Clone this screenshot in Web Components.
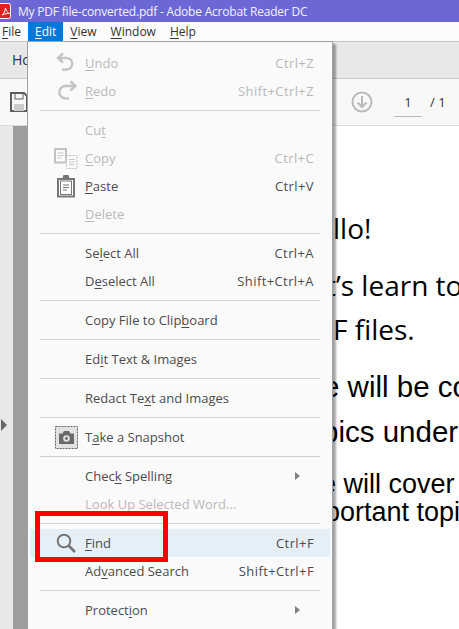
<!DOCTYPE html>
<html>
<head>
<meta charset="utf-8">
<style>
    html, body { margin: 0; padding: 0; height: 100%; overflow: hidden; background: #fff; }
    body { font-family: "Open Sans", "Noto Sans", sans-serif; }
</style>
</head>
<body>
<reader-window></reader-window>

<script>
const ICONS = {
    undo: `<svg width="22" height="22" viewBox="0 0 22 22" fill="none" stroke="#c4c4c4" stroke-width="2.4"><path d="M3.500 6h8a5.700 5.700 0 0 1 0 11.500H7"/><path d="M8 1.500 3 6l5 4.500"/></svg>`,
    redo: `<svg width="22" height="22" viewBox="0 0 22 22" fill="none" stroke="#c4c4c4" stroke-width="2.4"><path d="M20 6h-9.500a6.200 6.200 0 0 0 0 12.400H14"/><path d="M15.500 1.500 20.500 6l-5 4.500"/></svg>`,
    copy: `<svg width="24" height="21" viewBox="0 0 24 21" fill="none"><rect x="1" y="1" width="11" height="13.500" fill="#fafafa" stroke="#c2c2c2" stroke-width="2"/><path d="M3.500 5h6M3.500 7.500h6M3.500 10h4" stroke="#c8c8c8"/><rect x="12.500" y="7.500" width="10.500" height="13" fill="#fafafa" stroke="#c2c2c2" stroke-dasharray="2 1"/><path d="M15 11.500h6M15 14h6M15 16.500h5" stroke="#c8c8c8"/></svg>`,
    paste: `<svg width="20" height="24" viewBox="0 0 20 24" fill="none"><path d="M1 4h5.500l1-3h5l1 3H19v19.500H1z" fill="#777"/><rect x="3" y="6" width="14" height="15.500" fill="#fff"/><rect x="4.500" y="7" width="11" height="13.500" fill="#fff" stroke="#777"/><path d="M7 11h6M7 13.500h6M7 16h4" stroke="#777"/></svg>`,
    snapshot: `<svg width="23" height="23" viewBox="0 0 23 23" fill="none"><rect x="0.500" y="0.500" width="22" height="22" fill="#e2e2e2" stroke="#666" stroke-dasharray="2 1"/><path d="M4 7.500h3.500L9 5h5l1.500 2.500H19V18H4z" fill="#6a6a6a"/><circle cx="11.500" cy="12.500" r="3.300" fill="#e2e2e2"/><circle cx="11.500" cy="12.500" r="1.400" fill="#6a6a6a"/></svg>`,
    find: `<svg width="20" height="20" viewBox="0 0 20 20" fill="none" stroke="#767676"><circle cx="8" cy="8" r="6.300" stroke-width="2"/><path d="M12.500 12.500 19 19" stroke-width="2.600"/></svg>`
};

const MENU_ROWS = [
    { text: 'Undo', key: 'U', short: 'Ctrl+Z', off: true, icon: 'undo' },
    { text: 'Redo', key: 'R', short: 'Shift+Ctrl+Z', off: true, icon: 'redo' },
    { sep: true },
    { text: 'Cut', key: 't', short: '', off: true },
    { text: 'Copy', key: 'C', short: 'Ctrl+C', off: true, icon: 'copy' },
    { text: 'Paste', key: 'P', short: 'Ctrl+V', icon: 'paste' },
    { text: 'Delete', key: 'D', short: '', off: true },
    { sep: true },
    { text: 'Select All', key: 'l', short: 'Ctrl+A' },
    { text: 'Deselect All', key: 'e', short: 'Shift+Ctrl+A' },
    { sep: true },
    { text: 'Copy File to Clipboard', key: 'b', short: '' },
    { sep: true },
    { text: 'Edit Text & Images', key: 'i', short: '' },
    { sep: true },
    { text: 'Redact Text and Images', key: 'x', short: '' },
    { sep: true },
    { text: 'Take a Snapshot', key: 'a', short: '', icon: 'snapshot' },
    { sep: true },
    { text: 'Check Spelling', key: 'k', short: '', more: true },
    { text: 'Look Up Selected Word...', key: 'o', short: '', off: true },
    { sep: true },
    { text: 'Find', key: 'F', short: 'Ctrl+F', icon: 'find', hover: true },
    { text: 'Advanced Search', key: 'v', short: 'Shift+Ctrl+F' },
    { sep: true },
    { text: 'Protection', key: 'i', short: '', more: true, lastKey: true }
];

class TitleBar extends HTMLElement {
    constructor() {
        super();
        this.attachShadow({ mode: 'open' });
        this.shadowRoot.innerHTML = `
            <style>
                :host { display: flex; align-items: center; height: 22px; background: #6b68d6; color: #f2f2fc; font-size: 12px; letter-spacing: -0.2px; gap: 7px; }
                svg { flex: none; }
                span { white-space: nowrap; }
            </style>
            <svg width="11" height="16" viewBox="0 0 11 16"><path d="M-3 .5h11.500a2 2 0 0 1 2 2v11a2 2 0 0 1-2 2H-3z" fill="#e0211d" stroke="#fff"/><path d="M2 12c2-1 3-4 3.500-7 .5 3 2 5 4 5.500-2-.2-5 .3-7.500 1.500z" fill="none" stroke="#fff" stroke-width="1"/></svg>
            <span><slot></slot></span>
        `;
    }
}

class MenuBar extends HTMLElement {
    constructor() {
        super();
        this.attachShadow({ mode: 'open' });
        const names = [['File', 'F'], ['Edit', 'E'], ['View', 'V'], ['Window', 'W'], ['Help', 'H']];
        const items = names.map(([n, k]) =>
            `<div class="m ${n === 'Edit' ? 'on' : ''}"><u>${k}</u>${n.slice(1)}</div>`).join('');
        this.shadowRoot.innerHTML = `
            <style>
                :host { display: flex; height: 19px; background: #fbfbfb; border-bottom: 1px solid #c4c4c4; font-size: 12px; color: #333; line-height: 19px; }
                .m { padding: 0 7px; }
                .m:first-of-type { padding: 0 7px 0 2px; }
                .on { background: #0078d7; color: #fff; }
                u { text-underline-offset: 2px; }
            </style>
            ${items}
        `;
    }
}

class MenuRow extends HTMLElement {
    constructor() {
        super();
        this.attachShadow({ mode: 'open' });
    }

    set data(d) {
        let label = d.text;
        const idx = d.lastKey ? d.text.lastIndexOf(d.key) : d.text.indexOf(d.key);
        if (idx >= 0) {
            label = d.text.slice(0, idx) + '<u>' + d.key + '</u>' + d.text.slice(idx + 1);
        }
        label = label.replace(' & ', ' &amp; ');
        this.shadowRoot.innerHTML = `
            <style>
                :host { display: flex; align-items: center; height: 28px; margin: 0 2px; color: ${d.off ? '#b9b9b9' : '#4c4c4c'}; background: ${d.hover ? '#e5eff8' : 'transparent'}; font-size: 13px; white-space: nowrap; }
                .ic { flex: none; width: 55px; display: flex; justify-content: center; padding-left: 17px; box-sizing: border-box; }
                .t { flex: 1; }
                .s { padding-right: 16px; letter-spacing: .4px; }
                .arrow { width: 0; height: 0; border-left: 5px solid #808080; border-top: 4px solid transparent; border-bottom: 4px solid transparent; margin-right: 30px; }
                u { text-underline-offset: 2px; }
            </style>
            <div class="ic">${d.icon ? ICONS[d.icon] : ''}</div>
            <div class="t">${label}</div>
            ${d.short ? `<div class="s">${d.short}</div>` : ''}
            ${d.more ? '<div class="arrow"></div>' : ''}
        `;
    }
}

class MenuSep extends HTMLElement {
    constructor() {
        super();
        this.attachShadow({ mode: 'open' });
        this.shadowRoot.innerHTML = `
            <style>
                :host { display: block; height: 1px; margin: 5px 12px; background: #cfcfcf; }
            </style>
        `;
    }
}

class EditMenu extends HTMLElement {
    constructor() {
        super();
        this.attachShadow({ mode: 'open' });
        this.shadowRoot.innerHTML = `
            <style>
                :host { display: block; position: absolute; left: 27px; top: 41px; width: 306px; height: 600px; box-sizing: border-box; background: #fafafa; border: 1px solid #a0a0a0; box-shadow: 3px 3px 2px rgba(0,0,0,.35); padding-top: 7px; }
            </style>
            <slot></slot>
        `;
        MENU_ROWS.forEach(r => {
            if (r.sep) {
                this.appendChild(document.createElement('menu-sep'));
            } else {
                const row = document.createElement('menu-row');
                row.data = r;
                this.appendChild(row);
            }
        });
    }
}

class ToolStrip extends HTMLElement {
    constructor() {
        super();
        this.attachShadow({ mode: 'open' });
        this.shadowRoot.innerHTML = `
            <style>
                :host { display: block; font-size: 13px; color: #333; }
                .tabs { height: 36px; background: #e8e8e8; border-bottom: 1px solid #c8c8c8; padding-left: 12px; line-height: 36px; font-size: 14px; }
                .tools { height: 46px; background: #f8f8f8; border-bottom: 1px solid #dcdcdc; display: flex; align-items: center; }
                .save { margin-left: 10px; flex: none; }
                .right { display: flex; align-items: center; margin-left: 323px; gap: 21px; }
                .page { display: flex; gap: 8px; align-items: center; }
                .num { width: 28px; text-align: center; border-bottom: 1px solid #bbb; line-height: 22px; padding-bottom: 3px; margin-top: 3px; }
            </style>
            <div class="tabs">Ho</div>
            <div class="tools">
                <svg class="save" width="18" height="20" viewBox="0 0 18 20" fill="none"><path d="M1 1h13l3 3v15H1z" stroke="#5f5f5f" stroke-width="2"/><rect x="5" y="1" width="8" height="6" stroke="#5f5f5f"/><rect x="4" y="12" width="10" height="7" fill="#ccc"/></svg>
                <div class="right">
                    <svg width="22" height="22" viewBox="0 0 22 22" fill="none" stroke="#bababa"><circle cx="11" cy="11" r="9.500" stroke-width="2"/><path d="M11 5v11M6.500 11.500 11 16l4.500-4.500" stroke-width="2"/></svg>
                    <div class="page"><div class="num">1</div><div>/ 1</div></div>
                </div>
            </div>
        `;
    }
}

class ReaderWindow extends HTMLElement {
    constructor() {
        super();
        this.attachShadow({ mode: 'open' });
        this.shadowRoot.innerHTML = `
            <style>
                :host { display: flex; flex-direction: column; height: 629px; width: 459px; position: relative; overflow: hidden; }
                .body { flex: 1; min-height: 0; display: flex; }
                .rail { flex: none; width: 13px; background: #e8e8e8; position: relative; }
                .rail i { position: absolute; left: 1px; top: 293px; border-left: 6px solid #666; border-top: 6px solid transparent; border-bottom: 6px solid transparent; }
                .gutter { flex: none; width: 15px; background: #9d9d9d; }
                .sheet { flex: 1; min-width: 0; background: #fff; padding-left: 305px; color: #000; white-space: nowrap; overflow: hidden; }
                p { margin: 0; line-height: 30px; }
                .c { font-family: "Open Sans", sans-serif; font-size: 28px; }
                .a { font-family: "Liberation Sans", sans-serif; font-size: 29.5px; }
                .b { font-family: "Liberation Sans", sans-serif; font-size: 27px; line-height: 28px; }
                .mark { position: absolute; left: 35px; top: 511px; width: 133px; height: 51px; box-sizing: border-box; border: 5px solid #f00; }
            </style>
            <title-bar>My PDF file-converted.pdf - Adobe Acrobat Reader DC</title-bar>
            <menu-bar></menu-bar>
            <tool-strip></tool-strip>
            <div class="body">
                <div class="rail"><i></i></div>
                <div class="gutter"></div>
                <div class="sheet">
                    <p class="c" style="margin-top:87px">llo!</p>
                    <p class="c" style="margin-top:27px;margin-left:-7px">t’s learn to</p>
                    <p class="c" style="margin-top:14px">F files.</p>
                    <p class="a" style="margin-top:28px;margin-left:-10px">e will be co</p>
                    <p class="a" style="margin-top:15px;margin-left:-11px">pics under</p>
                    <p class="b" style="margin-top:23px;margin-left:-12px">e will cover</p>
                    <p class="b" style="margin-left:-8px">portant topi</p>
                </div>
            </div>
            <edit-menu></edit-menu>
            <div class="mark"></div>
        `;
    }
}

customElements.define('title-bar', TitleBar);
customElements.define('menu-bar', MenuBar);
customElements.define('menu-row', MenuRow);
customElements.define('menu-sep', MenuSep);
customElements.define('edit-menu', EditMenu);
customElements.define('tool-strip', ToolStrip);
customElements.define('reader-window', ReaderWindow);
</script>
</body>
</html>
